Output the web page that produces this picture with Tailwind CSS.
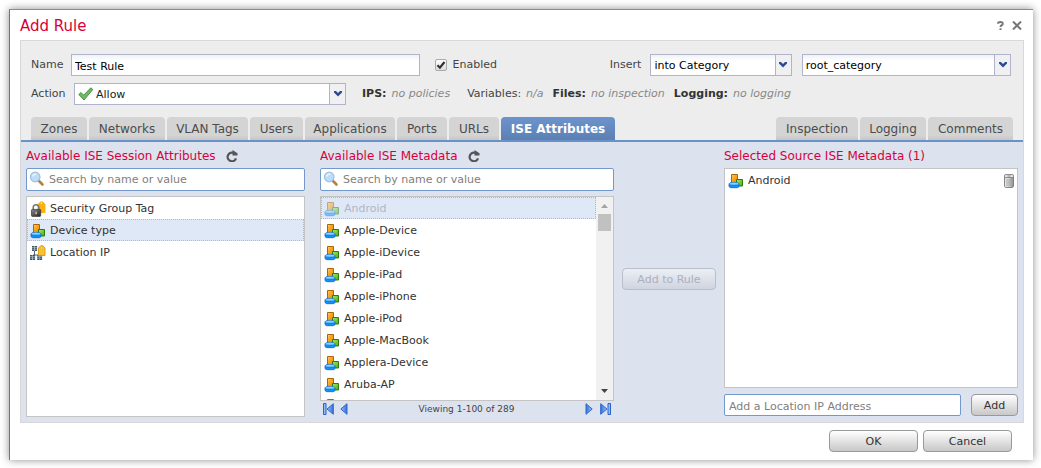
<!DOCTYPE html>
<html lang="en">
<head>
<meta charset="utf-8">
<meta name="viewport" content="width=device-width, initial-scale=1">
<title>Add Rule</title>
<script src="https://cdn.jsdelivr.net/npm/@tailwindcss/browser@4"></script>
</head>
<body class="bg-white font-['DejaVu_Sans',Verdana,sans-serif] text-[11px] leading-4 text-[#444]">

<svg class="absolute size-0" aria-hidden="true">
  <defs>
    <linearGradient id="g-or" x1="0" y1="0" x2="1" y2="1"><stop offset="0" stop-color="#ffd27a"/><stop offset=".4" stop-color="#fba51c"/><stop offset="1" stop-color="#f08c00"/></linearGradient>
    <linearGradient id="g-gr" x1="0" y1="0" x2="1" y2="1"><stop offset="0" stop-color="#a8e86e"/><stop offset="1" stop-color="#3fae10"/></linearGradient>
    <linearGradient id="g-bl" x1="0" y1="0" x2="0" y2="1"><stop offset="0" stop-color="#b4ecff"/><stop offset="1" stop-color="#3aa8fa"/></linearGradient>
    <linearGradient id="g-nav" x1="0" y1="0" x2="1" y2="0"><stop offset="0" stop-color="#9cc4f5"/><stop offset="1" stop-color="#3470d4"/></linearGradient>
    <linearGradient id="g-can" x1="0" y1="0" x2="1" y2="0"><stop offset="0" stop-color="#f6f6f6"/><stop offset=".4" stop-color="#e4e4e4"/><stop offset="1" stop-color="#8f8f8f"/></linearGradient>
    <linearGradient id="g-lock" x1="0" y1="0" x2="1" y2="1"><stop offset="0" stop-color="#8a8a8a"/><stop offset="1" stop-color="#222"/></linearGradient>
  </defs>
  <symbol id="device" viewBox="0 0 16 16">
    <path d="M3.500 1.500h6v9h-6z" fill="url(#g-or)" stroke="#a8660a"/>
    <path d="M8.500 6.500h6V13h-6z" fill="url(#g-gr)" stroke="#2d7a10"/>
    <path d="M1 10.800v2.400c0 .9 1.200 1.500 2.300 1.500h5.400c1.200 0 2.300-.6 2.300-1.500v-2.400z" fill="#1590f5" stroke="#0b62c4" stroke-width=".8"/>
    <ellipse cx="6" cy="10.900" rx="5" ry="1.700" fill="url(#g-bl)" stroke="#1a74d0" stroke-width=".8"/>
  </symbol>
  <symbol id="lock-tag" viewBox="0 0 16 16">
    <path d="M7.500 3.200 10.500.4h2.200l2.800 2.800V12H7.500z" fill="#f9b20e"/>
    <circle cx="11.400" cy="2.200" r=".7" fill="#fff3c8"/>
    <path d="M3.200 9V6.600a2.800 2.800 0 0 1 5.600 0V9" fill="none" stroke="#777" stroke-width="1.500"/>
    <rect x="1.500" y="8.400" width="9.200" height="7" rx=".8" fill="url(#g-lock)" stroke="#333" stroke-width=".7"/>
    <path d="M5.500 10.700h1.200v2.600H5.500z" fill="#ddd"/>
  </symbol>
  <symbol id="location" viewBox="0 0 16 16">
    <path d="M4.500 6v4M3 12v-2h7v2" fill="none" stroke="#567" stroke-width="1"/>
    <g fill="#3f5566"><path d="M2 1h2.300v5H2zM4.800 1h2.300v5H4.800zM0 10h2.300v5H0zM2.800 10h2.300v5H2.800zM7.200 10h2.300v5H7.200zM9.800 10h2.300v5H9.800z"/></g>
    <path d="M2 2.500h5M2 4.200h5M0 11.500h5M0 13.200h5M7.200 11.500h5M7.200 13.200h5" stroke="#a9c3d6" stroke-width=".6"/>
    <path d="M8.500 3 10.700.7h2.100L15 3v7.500H8.500z" fill="#f8c233" stroke="#d79a10" stroke-width=".9"/>
    <circle cx="11.800" cy="3" r=".9" fill="#fff" stroke="#c98b0a" stroke-width=".4"/>
  </symbol>
  <symbol id="search" viewBox="0 0 16 16">
    <path d="m9.500 9.500 4 4" stroke="#b9803c" stroke-width="2.600" stroke-linecap="round"/>
    <path d="m9 9 1.500 1.500" stroke="#888" stroke-width="1.500"/>
    <circle cx="6.200" cy="6" r="4.800" fill="#bcdcf8" stroke="#9fbfe4" stroke-width="1.200"/>
    <path d="M3.500 5.500C4 3.500 6 2.800 7.500 3.300" stroke="#f2faff" stroke-width="1.300" fill="none"/>
  </symbol>
  <symbol id="refresh" viewBox="0 0 12 12">
    <path d="M10 8.300A4.300 4.300 0 1 1 6.500 2.700H8" fill="none" stroke="#555" stroke-width="2.200"/>
    <path d="M6.500 0 11.500 3.200V5.500H6.500z" fill="#555"/>
  </symbol>
  <symbol id="chev" viewBox="0 0 8 6">
    <path d="M0 0h2l2 2 2-2h2v1.500L4 5.500 0 1.500z" fill="#2c4a92"/>
  </symbol>
  <symbol id="prev" viewBox="0 0 8 12"><path d="M7 .7v10.600L.8 6z" fill="url(#g-nav)" stroke="#2f68cf"/></symbol>
  <symbol id="first" viewBox="0 0 11 12"><path d="M.5.500h2.500v11H.5z" fill="#8fbcf2" stroke="#2a62c8"/><path d="M10.300.7v10.600L4 6z" fill="url(#g-nav)" stroke="#2f68cf"/></symbol>
</svg>

<div class="flex min-h-screen pt-[9px] pr-2 pb-2 pl-[9px]">
<main class="flex flex-1 flex-col border-t border-l border-t-[#8c8c8c] border-l-[#6f7480] bg-white pr-[9px] pl-[10px] shadow-[0_0_8px_rgba(0,0,0,0.45)]">

  <header class="flex h-[30px] items-center justify-between pt-px pr-[2px]">
    <h1 class="text-[15px] leading-5 text-[#d9003a]">Add Rule</h1>
    <div class="flex items-center gap-2">
      <button type="button" aria-label="Help" class="flex text-[#777]"><svg class="h-[9px] w-[7px]" viewBox="0 0 7 9"><path d="M1 2.800C1 .5 5.800.4 5.800 2.700 5.800 4.300 3.500 4 3.500 6M3.500 7.200V9" fill="none" stroke="currentColor" stroke-width="2"/></svg></button>
      <button type="button" aria-label="Close" class="flex text-[#777]"><svg class="h-[9px] w-[10px]" viewBox="0 0 10 9"><path d="m1 .5 8 8M9 .5l-8 8" fill="none" stroke="currentColor" stroke-width="2"/></svg></button>
    </div>
  </header>

  <form class="flex flex-1 flex-col border border-[#d8d8d8] bg-[#ededed]">
    <div class="flex items-center pt-[13px] pr-[12px] pl-[10px]">
      <label for="name" class="w-10">Name</label>
      <input id="name" type="text" value="Test Rule" class="h-[22px] min-w-0 flex-[340] border border-[#b1b3cb] bg-linear-to-b from-[#eef3f5] to-white to-30% px-[3px] pt-[2px] text-black">
      <label class="ml-[15px] flex flex-[175] items-center gap-[6px]">
        <span class="relative flex">
          <input type="checkbox" checked class="size-3 appearance-none rounded-xs border border-[#aaa] bg-linear-to-b from-white to-[#ddd]">
          <svg class="pointer-events-none absolute inset-0 size-3" viewBox="0 0 12 12"><path d="m2.500 6.300 2.400 2.400L9.500 3" fill="none" stroke="#333" stroke-width="2.200"/></svg>
        </span>
        Enabled
      </label>
      <label for="insert" class="mr-[9px]">Insert</label>
      <span class="relative flex flex-[141]">
        <select id="insert" class="h-[22px] w-full appearance-none border border-[#b1b3cb] bg-linear-to-b from-[#eef3f5] to-white to-30% pt-[2px] pr-5 pl-[3px] text-black"><option>into Category</option></select>
        <span class="pointer-events-none absolute inset-y-px right-px flex w-4 items-center justify-center border-l border-[#b1b3cb] bg-[#f0f0f3]"><svg class="h-[6px] w-2"><use href="#chev"/></svg></span>
      </span>
      <span class="relative ml-[10px] flex flex-[209]">
        <select aria-label="Category" class="h-[22px] w-full appearance-none border border-[#b1b3cb] bg-linear-to-b from-[#eef3f5] to-white to-30% pt-[2px] pr-5 pl-[3px] text-black"><option>root_category</option></select>
        <span class="pointer-events-none absolute inset-y-px right-px flex w-4 items-center justify-center border-l border-[#b1b3cb] bg-[#f0f0f3]"><svg class="h-[6px] w-2"><use href="#chev"/></svg></span>
      </span>
    </div>

    <div class="flex items-center pt-[7px] pl-[10px]">
      <label for="action" class="w-[43px]">Action</label>
      <span class="relative flex w-[272px]">
        <select id="action" class="h-[22px] w-full appearance-none border border-[#b1b3cb] bg-white pt-[2px] pr-5 pl-[21px] text-[#222]"><option>Allow</option></select>
        <svg class="pointer-events-none absolute top-1 left-1 h-[14px] w-4" viewBox="0 0 16 14"><path d="m.8 7.500 2.200-2 2.700 2.700L12.800.8l2 1.700L6 13z" fill="#6dbb63" stroke="#3d8a3a" stroke-width=".9"/></svg>
        <span class="pointer-events-none absolute inset-y-px right-px flex w-4 items-center justify-center border-l border-[#b1b3cb] bg-[#f0f0f3]"><svg class="h-[6px] w-2"><use href="#chev"/></svg></span>
      </span>
      <p class="ml-4 flex gap-[5px] whitespace-nowrap"><b class="text-[#333]">IPS:</b><i class="mr-3 text-[#888]">no policies</i><span>Variables:</span><i class="mr-1 text-[#888]">n/a</i><b class="text-[#333]">Files:</b><i class="mr-1 text-[#888]">no inspection</i><b class="text-[#333]">Logging:</b><i class="text-[#888]">no logging</i></p>
    </div>

    <nav class="mt-3 flex items-end gap-[2px] border-b-2 border-[#6b92c8] px-[10px] text-[12px] text-[#4c4c4c]">
      <button type="button" class="h-[23px] w-14 rounded-t-sm bg-linear-to-b from-[#d4d4d4] from-80% to-[#c6c6c6]">Zones</button>
      <button type="button" class="h-[23px] w-[76px] rounded-t-sm bg-linear-to-b from-[#d4d4d4] from-80% to-[#c6c6c6]">Networks</button>
      <button type="button" class="h-[23px] w-[81px] rounded-t-sm bg-linear-to-b from-[#d4d4d4] from-80% to-[#c6c6c6]">VLAN Tags</button>
      <button type="button" class="h-[23px] w-[53px] rounded-t-sm bg-linear-to-b from-[#d4d4d4] from-80% to-[#c6c6c6]">Users</button>
      <button type="button" class="h-[23px] w-[90px] rounded-t-sm bg-linear-to-b from-[#d4d4d4] from-80% to-[#c6c6c6]">Applications</button>
      <button type="button" class="h-[23px] w-[50px] rounded-t-sm bg-linear-to-b from-[#d4d4d4] from-80% to-[#c6c6c6]">Ports</button>
      <button type="button" class="h-[23px] w-[50px] rounded-t-sm bg-linear-to-b from-[#d4d4d4] from-80% to-[#c6c6c6]">URLs</button>
      <button type="button" class="mr-auto h-[23px] w-[114px] rounded-t-sm bg-linear-to-b from-[#6c94cc] to-[#5c80b4] font-bold text-white">ISE Attributes</button>
      <button type="button" class="h-[23px] w-[82px] rounded-t-sm bg-linear-to-b from-[#d4d4d4] from-80% to-[#c6c6c6]">Inspection</button>
      <button type="button" class="h-[23px] w-[66px] rounded-t-sm bg-linear-to-b from-[#d4d4d4] from-80% to-[#c6c6c6]">Logging</button>
      <button type="button" class="h-[23px] w-[85px] rounded-t-sm bg-linear-to-b from-[#d4d4d4] from-80% to-[#c6c6c6]">Comments</button>
    </nav>

    <div class="flex flex-1 bg-[#dce3ef] px-[5px] pt-1 pb-[5px]">
      <section class="mr-[15px] flex min-w-0 flex-[279] flex-col">
        <div class="flex h-[22px] items-center gap-[10px] pb-[2px]"><h2 class="text-[12px] text-[#d9003a]">Available ISE Session Attributes</h2><button type="button" aria-label="Refresh" class="flex"><svg class="size-3"><use href="#refresh"/></svg></button></div>
        <div class="relative mb-[5px] flex">
          <svg class="absolute top-[3px] left-[3px] size-4"><use href="#search"/></svg>
          <input type="text" aria-label="Search attributes" placeholder="Search by name or value" class="h-[23px] w-full rounded-xs border border-[#7399cc] bg-white pl-[22px] placeholder:text-[#808080]">
        </div>
        <ul class="min-h-[100px] flex-1 border border-[#c4c4c4] bg-white text-[#333]">
          <li class="flex h-[22px] items-center gap-1 px-[3px] pt-[2px]"><svg class="size-4"><use href="#lock-tag"/></svg>Security Group Tag</li>
          <li class="flex h-[22px] items-center gap-1 border border-dotted border-[#a3bae9] bg-[#dfe8f6] px-[2px] pt-[2px]"><svg class="size-4"><use href="#device"/></svg>Device type</li>
          <li class="flex h-[22px] items-center gap-1 px-[3px] pt-[2px]"><svg class="size-4"><use href="#location"/></svg>Location IP</li>
        </ul>
      </section>

      <section class="mr-2 flex min-w-0 flex-[294] flex-col">
        <div class="flex h-[22px] items-center gap-[10px] pb-[2px]"><h2 class="text-[12px] text-[#d9003a]">Available ISE Metadata</h2><button type="button" aria-label="Refresh" class="flex"><svg class="size-3"><use href="#refresh"/></svg></button></div>
        <div class="relative mb-[5px] flex">
          <svg class="absolute top-[3px] left-[3px] size-4"><use href="#search"/></svg>
          <input type="text" aria-label="Search metadata" placeholder="Search by name or value" class="h-[23px] w-full rounded-xs border border-[#7399cc] bg-white pl-[22px] placeholder:text-[#808080]">
        </div>
        <div class="flex min-h-[100px] flex-[1_1_0] overflow-hidden border border-[#c4c4c4] bg-white">
          <ul class="h-0 min-w-0 flex-1 text-[#333]">
            <li class="flex h-[22px] items-center gap-1 border border-dotted border-[#a3bae9] bg-[#dfe8f6] px-[2px] pt-[2px] text-[#b0b7c4]"><svg class="size-4 opacity-50"><use href="#device"/></svg>Android</li>
            <li class="flex h-[22px] items-center gap-1 px-[3px] pt-[2px]"><svg class="size-4"><use href="#device"/></svg>Apple-Device</li>
            <li class="flex h-[22px] items-center gap-1 px-[3px] pt-[2px]"><svg class="size-4"><use href="#device"/></svg>Apple-iDevice</li>
            <li class="flex h-[22px] items-center gap-1 px-[3px] pt-[2px]"><svg class="size-4"><use href="#device"/></svg>Apple-iPad</li>
            <li class="flex h-[22px] items-center gap-1 px-[3px] pt-[2px]"><svg class="size-4"><use href="#device"/></svg>Apple-iPhone</li>
            <li class="flex h-[22px] items-center gap-1 px-[3px] pt-[2px]"><svg class="size-4"><use href="#device"/></svg>Apple-iPod</li>
            <li class="flex h-[22px] items-center gap-1 px-[3px] pt-[2px]"><svg class="size-4"><use href="#device"/></svg>Apple-MacBook</li>
            <li class="flex h-[22px] items-center gap-1 px-[3px] pt-[2px]"><svg class="size-4"><use href="#device"/></svg>Applera-Device</li>
            <li class="flex h-[22px] items-center gap-1 px-[3px] pt-[2px]"><svg class="size-4"><use href="#device"/></svg>Aruba-AP</li>
            <li class="flex h-[22px] items-center gap-1 px-[3px]"><svg class="size-4"><use href="#device"/></svg></li>
          </ul>
          <div class="flex w-[17px] flex-col items-center bg-[#f1f1f1]">
            <svg class="mt-[7px] h-1 w-[7px]" viewBox="0 0 7 4"><path d="M0 4h7L3.500 0z" fill="#a3a3a3"/></svg>
            <div class="mt-[6px] h-[17px] w-[13px] bg-[#c1c1c1]"></div>
            <svg class="mt-auto mb-[7px] h-1 w-[7px]" viewBox="0 0 7 4"><path d="M0 0h7L3.500 4z" fill="#444"/></svg>
          </div>
        </div>
        <div class="flex h-4 items-center px-[3px] text-[9px] text-[#444]">
          <button type="button" aria-label="First page" class="mr-[6px] flex"><svg class="h-3 w-[11px]"><use href="#first"/></svg></button>
          <button type="button" aria-label="Previous page" class="flex"><svg class="h-3 w-2"><use href="#prev"/></svg></button>
          <span class="flex-1 text-center">Viewing 1-100 of 289</span>
          <button type="button" aria-label="Next page" class="mr-[7px] flex"><svg class="h-3 w-2 rotate-180"><use href="#prev"/></svg></button>
          <button type="button" aria-label="Last page" class="flex"><svg class="h-3 w-[11px] rotate-180"><use href="#first"/></svg></button>
        </div>
      </section>

      <div class="mr-2 flex items-center pb-[6px]">
        <button type="button" disabled class="h-[22px] w-[94px] rounded-sm border border-[#b9bec9] bg-linear-to-b from-[#eceff5] to-[#cfd4df] pt-[2px] text-[#abb0ba]">Add to Rule</button>
      </div>

      <section class="flex min-w-0 flex-[294] flex-col">
        <h2 class="flex h-[22px] items-center pb-[2px] text-[12px] text-[#d9003a]">Selected Source ISE Metadata (1)</h2>
        <ul class="mb-[6px] min-h-[100px] flex-1 border border-[#c4c4c4] bg-white text-[#333]">
          <li class="flex h-[22px] items-center gap-1 px-[3px] pt-[2px]"><svg class="size-4"><use href="#device"/></svg>Android
            <button type="button" aria-label="Remove Android" class="ml-auto flex"><svg class="h-[14px] w-[10px]" viewBox="0 0 10 14"><path d="M.6 2.500v9.600c0 .8.700 1.300 1.500 1.300h5.800c.8 0 1.500-.5 1.500-1.300V2.500z" fill="url(#g-can)" stroke="#777"/><path d="M3 5v7M5 5v7M7 5v7" stroke="#999" stroke-width=".9"/><rect x=".5" y=".6" width="9" height="3" rx="1.200" fill="#e8e8e8" stroke="#777" stroke-width=".9"/><path d="M3.500 2h3" stroke="#888"/></svg></button></li>
        </ul>
        <div class="mb-px flex gap-[10px]">
          <input type="text" aria-label="Location IP address" placeholder="Add a Location IP Address" class="h-[22px] min-w-0 flex-1 rounded-xs border border-[#7399cc] bg-white px-1 pt-[2px] placeholder:text-[#808080]">
          <button type="button" class="h-[22px] w-[47px] rounded-sm border border-[#999] bg-linear-to-b from-white to-[#c8c8c8] pt-[2px] text-[#333]">Add</button>
        </div>
      </section>
    </div>
  </form>

  <footer class="flex justify-end gap-[5px] pt-[7px] pr-[12px] pb-2">
    <button type="button" class="h-[22px] w-[89px] rounded-sm border border-[#999] bg-linear-to-b from-white to-[#c8c8c8] pt-[2px] text-[#333]">OK</button>
    <button type="button" class="h-[22px] w-[89px] rounded-sm border border-[#999] bg-linear-to-b from-white to-[#c8c8c8] pt-[2px] text-[#333]">Cancel</button>
  </footer>
</main>
</div>
</body>
</html>
